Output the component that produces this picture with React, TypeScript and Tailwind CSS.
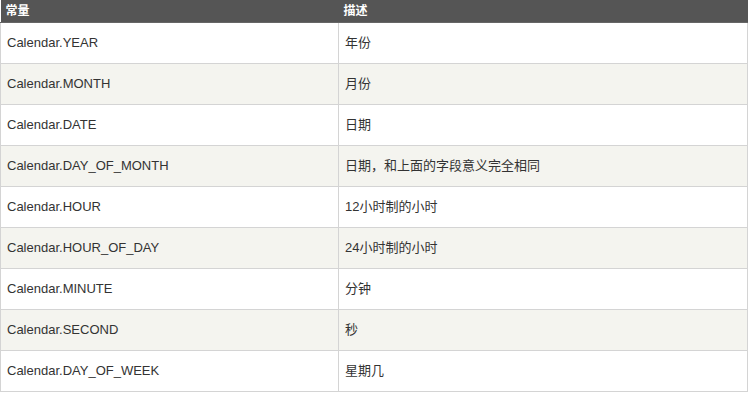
import React from 'react';

const rows: [string, string][] = [
    ['Calendar.YEAR', '年份'],
    ['Calendar.MONTH', '月份'],
    ['Calendar.DATE', '日期'],
    ['Calendar.DAY_OF_MONTH', '日期，和上面的字段意义完全相同'],
    ['Calendar.HOUR', '12小时制的小时'],
    ['Calendar.HOUR_OF_DAY', '24小时制的小时'],
    ['Calendar.MINUTE', '分钟'],
    ['Calendar.SECOND', '秒'],
    ['Calendar.DAY_OF_WEEK', '星期几'],
];

const App: React.FC = () => {
    return (
        <div className="w-[751px] h-[393px] bg-white overflow-hidden" style={{ fontFamily: '"Liberation Sans", Arial, "Noto Sans CJK SC", sans-serif' }}>
            <table className="w-[748px] border-collapse table-fixed text-[13px] text-[#333]">
                <colgroup>
                    <col className="w-[338px]" />
                    <col />
                </colgroup>
                <thead>
                    <tr className="h-[22px] bg-[#555555] text-white text-[12px] font-bold">
                        <th className="text-left px-[5px] border-b border-[#666]">常量</th>
                        <th className="text-left px-[5px] border-b border-[#666]">描述</th>
                    </tr>
                </thead>
                <tbody>
                    {rows.map(([name, desc], i) => (
                        <tr key={name} className={`h-[41px] ${i % 2 === 1 ? 'bg-[#f4f4ef]' : 'bg-white'}`}>
                            <td className="px-[6px] border border-[#d4d4d4]">{name}</td>
                            <td className="px-[6px] border border-[#d4d4d4]">{desc}</td>
                        </tr>
                    ))}
                </tbody>
            </table>
        </div>
    );
};

export default App;
